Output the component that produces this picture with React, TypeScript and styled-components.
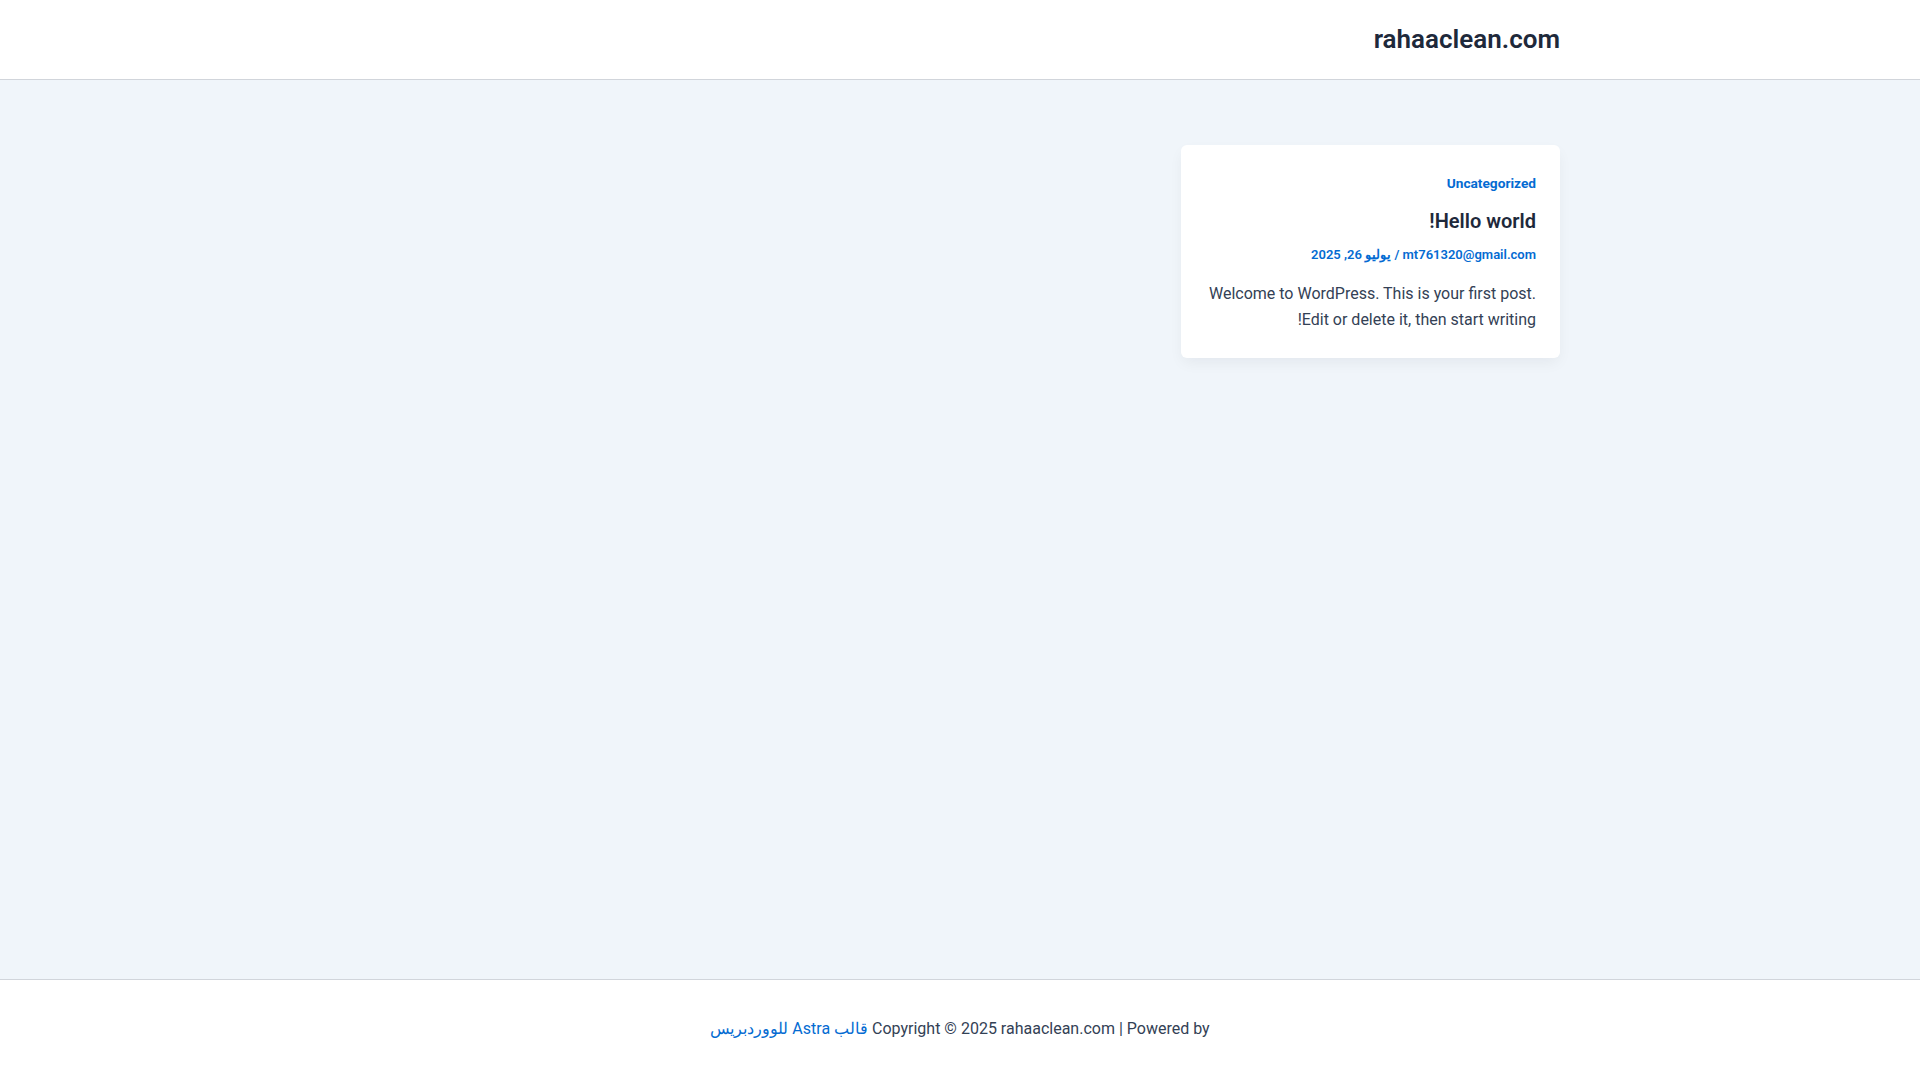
import React from "react";
import styled, { createGlobalStyle } from "styled-components";

const GlobalStyle = createGlobalStyle`
  html, body { margin: 0; padding: 0; }
  body {
    font-family: Roboto, "Noto Sans", "Liberation Sans", sans-serif;
    background: #f0f5fa;
    color: #334155;
    -webkit-font-smoothing: antialiased;
  }
  #root { min-height: 100vh; }
`;

const Page = styled.div`
  direction: rtl;
  min-height: 100vh;
  display: flex;
  flex-direction: column;
`;

const Header = styled.header`
  background: #ffffff;
  border-bottom: 1px solid #d1d5db;
  height: 80px;
  box-sizing: border-box;
`;

const Container = styled.div`
  width: 1200px;
  margin: 0 auto;
`;

const HeaderInner = styled(Container)`
  height: 100%;
  display: flex;
  align-items: center;
`;

const SiteTitle = styled.a`
  font-size: 26px;
  font-weight: 600;
  line-height: 1.23;
  color: #1e293b;
  text-decoration: none;
  padding-top: 1px;
`;

const Main = styled.main`
  flex: 1;
  background: #f0f5fa;
  padding-top: 65px;
`;

const Grid = styled(Container)`
  display: grid;
  grid-template-columns: repeat(3, 1fr);
  gap: 32px;
`;

const Card = styled.article`
  background: #ffffff;
  border-radius: 6px;
  box-shadow: 0px 6px 15px -2px rgba(16, 24, 40, 0.06);
  padding: 28px 24px 25px;
  text-align: right;
`;

const Category = styled.a`
  display: block;
  font-size: 13.7px;
  font-weight: 700;
  line-height: 20.8px;
  color: #046bd2;
  text-decoration: none;
`;

const Title = styled.h2`
  margin: 13px 0 0;
  font-size: 20px;
  font-weight: 600;
  line-height: 28px;
  color: #1e293b;
`;

const Meta = styled.div`
  margin-top: 10px;
  font-size: 13px;
  font-weight: 600;
  line-height: 20.8px;
  color: #046bd2;
`;

const Excerpt = styled.p`
  margin: 15px 0 0;
  font-size: 16px;
  line-height: 26px;
  color: #334155;
`;

const Footer = styled.footer`
  background: #ffffff;
  border-top: 1px solid #d1d5db;
  padding: 36px 0 38px;
  text-align: center;
`;

const FooterText = styled.p`
  margin: 0;
  font-size: 16px;
  line-height: 25.6px;
  color: #334155;
`;

const FooterLink = styled.a`
  color: #046bd2;
  text-decoration: none;
`;

export default function App() {
  return (
    <>
      <GlobalStyle />
      <Page dir="rtl">
        <Header>
          <HeaderInner>
            <SiteTitle href="#">rahaaclean.com</SiteTitle>
          </HeaderInner>
        </Header>
        <Main>
          <Grid>
            <Card>
              <Category href="#">Uncategorized</Category>
              <Title>Hello world!</Title>
              <Meta>mt761320@gmail.com / يوليو 26, 2025</Meta>
              <Excerpt>
                Welcome to WordPress. This is your first post. Edit or delete it, then start writing!
              </Excerpt>
            </Card>
          </Grid>
        </Main>
        <Footer>
          <FooterText>
            Copyright © 2025 rahaaclean.com | Powered by{" "}
            <FooterLink href="#">قالب Astra للووردبريس</FooterLink>
          </FooterText>
        </Footer>
      </Page>
    </>
  );
}
